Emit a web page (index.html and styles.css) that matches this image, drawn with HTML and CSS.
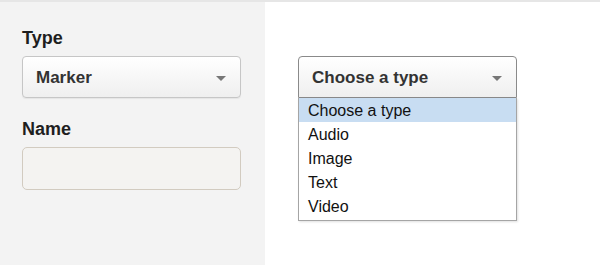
FILE: index.html
```html
<!DOCTYPE html>
<html>
<head>
<meta charset="utf-8">
<link rel="stylesheet" href="styles.css">
</head>
<body>
<div class="page">
  <aside class="side">
    <label class="lbl">Type</label>
    <div class="select">
      <span>Marker</span>
      <span class="caret"></span>
    </div>
    <label class="lbl lbl-name">Name</label>
    <div class="input"></div>
  </aside>
  <main class="main">
    <div class="combo">
      <div class="select open">
        <span>Choose a type</span>
        <span class="caret"></span>
      </div>
      <ul class="list">
        <li class="sel">Choose a type</li>
        <li>Audio</li>
        <li>Image</li>
        <li>Text</li>
        <li>Video</li>
      </ul>
    </div>
  </main>
</div>
</body>
</html>
```
FILE: styles.css
```css
html, body { margin: 0; padding: 0; background: #fff; }
body { font-family: "Liberation Sans", Arial, sans-serif; color: #222; }
.page {
  display: flex;
  height: 265px;
  border-top: 2px solid #e6e6e6;
  box-sizing: border-box;
}
.side {
  width: 265px;
  background: #f3f3f3;
  padding: 26px 24px 0 22px;
  box-sizing: border-box;
  display: flex;
  flex-direction: column;
}
.lbl {
  font-size: 18px;
  font-weight: bold;
  line-height: 21px;
  color: #1e1e1e;
  margin-bottom: 7px;
}
.lbl-name { margin-top: 21px; margin-bottom: 7px; }
.select {
  width: 219px;
  height: 42px;
  box-sizing: border-box;
  border: 1px solid #c6c6c6;
  border-radius: 4px;
  background: linear-gradient(#ffffff, #efefef);
  display: flex;
  align-items: center;
  justify-content: space-between;
  padding: 1px 14px 0 13px;
  font-size: 17px;
  font-weight: bold;
  color: #333;
  box-shadow: 0 1px 1px rgba(0,0,0,0.06);
}
.caret {
  width: 0; height: 0;
  border-left: 5px solid transparent;
  border-right: 5px solid transparent;
  border-top: 5px solid #777;
  margin-top: 1px;
}
.input {
  width: 219px;
  height: 43px;
  box-sizing: border-box;
  border: 1px solid #d2cbc0;
  border-radius: 5px;
  background: #f4f3f1;
}
.main {
  flex: 1;
  padding: 54px 0 0 33px;
}
.combo { width: 219px; }
.select.open {
  border-color: #8a8a8a;
  border-radius: 4px 4px 0 0;
  box-shadow: none;
}
.list {
  list-style: none;
  margin: 0;
  padding: 0 0 2px;
  border: 1px solid #a5a5a5;
  border-top: none;
  background: #fff;
  box-shadow: 1px 1px 2px rgba(0,0,0,0.12);
  font-weight: normal;
}
.list li {
  height: 24px;
  box-sizing: border-box;
  padding: 2px 0 0 9px;
  line-height: 22px;
  font-size: 16px;
  color: #111;
}
.list li.sel { background: #c8ddf2; }
```
